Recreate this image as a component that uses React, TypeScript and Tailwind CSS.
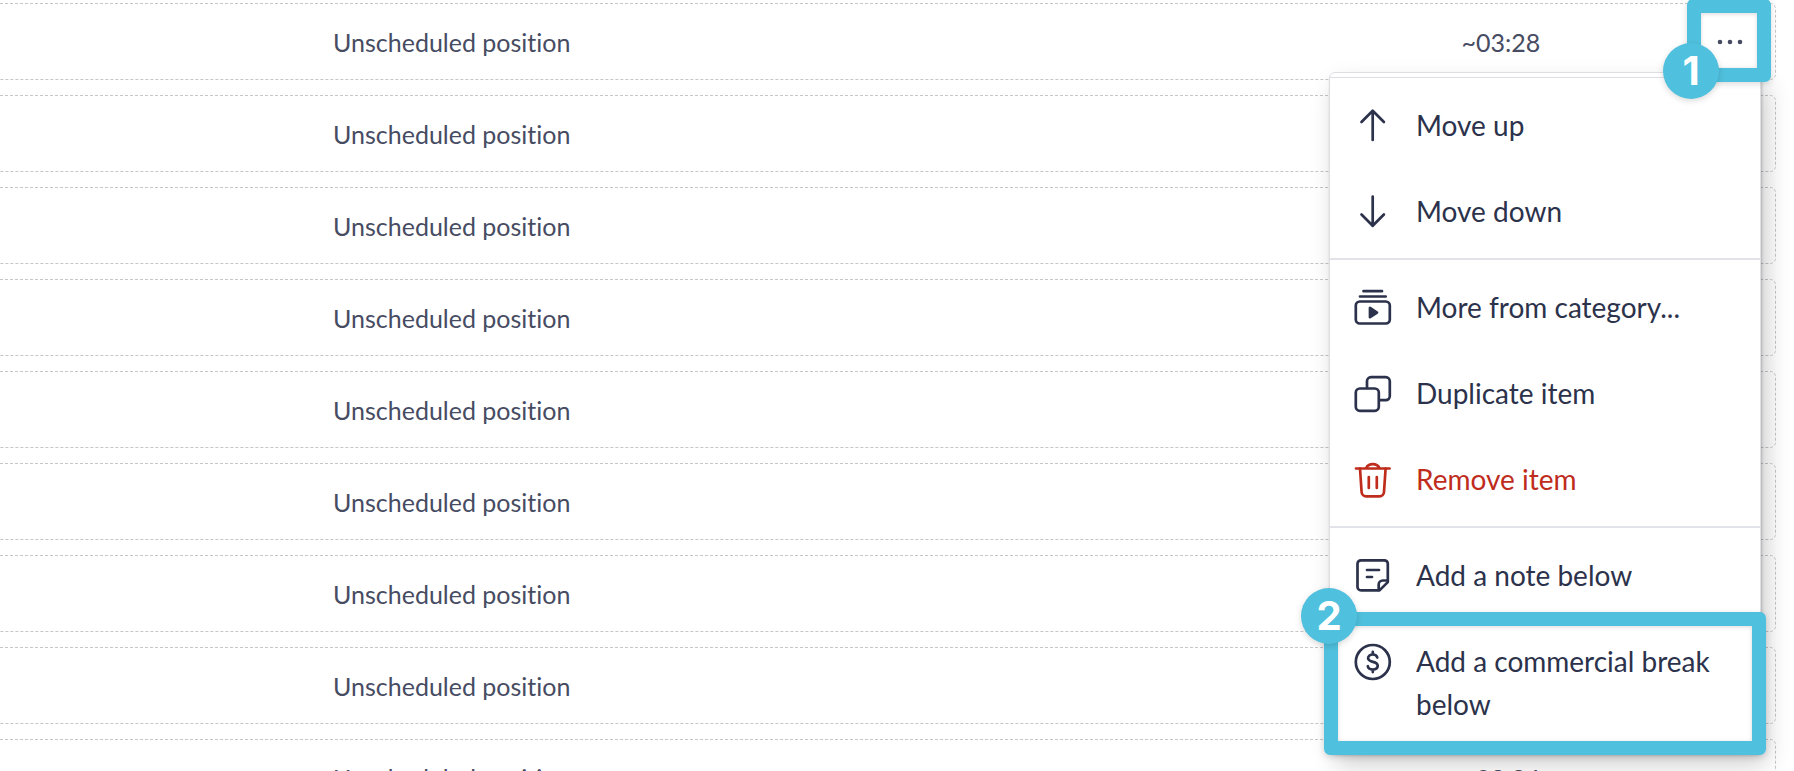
import type { ReactNode } from "react";

type MenuItem = {
  label: string;
  icon: ReactNode;
  danger?: boolean;
  step?: number;
};

const durations = ["~03:28", "", "", "", "", "", "", "", "~03:24"];

const Icon = ({ children }: { children: ReactNode }) => (
  <svg
    viewBox="0 0 36 36"
    className="mt-1 size-9 shrink-0 overflow-visible"
    fill="none"
    stroke="currentColor"
    strokeWidth="2.7"
    strokeLinecap="round"
    strokeLinejoin="round"
    aria-hidden="true"
  >
    {children}
  </svg>
);

const sections: MenuItem[][] = [
  [
    {
      label: "Move up",
      icon: (
        <Icon>
          <path d="M17.7 32V3M6.5 14 17.7 2.8 28.9 14" />
        </Icon>
      ),
    },
    {
      label: "Move down",
      icon: (
        <Icon>
          <path d="M17.7 2.5V32M6.5 20.5l11.2 11.2 11.2-11.2" />
        </Icon>
      ),
    },
  ],
  [
    {
      label: "More from category...",
      icon: (
        <Icon>
          <path d="M8.5 1.2H27M5 6.5h25.7" />
          <rect x="0.8" y="11.5" width="34" height="22" rx="4" />
          <path d="M15 18v9.2l7-4.600z" fill="currentColor" />
        </Icon>
      ),
    },
    {
      label: "Duplicate item",
      icon: (
        <Icon>
          <rect x="0.8" y="12.5" width="23" height="22.3" rx="4" />
          <path d="M12 12V5.200a4 4 0 0 1 4-4h14.800a4 4 0 0 1 4 4v14.900a4 4 0 0 1-4 4h-6.500" />
        </Icon>
      ),
    },
    {
      label: "Remove item",
      danger: true,
      icon: (
        <Icon>
          <path d="M1 6.500h33.600M11.200 6a7.100 6 0 0 1 13.200 0" />
          <path d="m5 6.500 1.600 23.500a4.500 4.500 0 0 0 4.500 4.300h13.400a4.500 4.500 0 0 0 4.500-4.300L30.600 6.500" />
          <path d="M13.800 15v11M21.800 15v11" />
        </Icon>
      ),
    },
  ],
  [
    {
      label: "Add a note below",
      icon: (
        <Icon>
          <path d="M24.500 32.400H6a3.500 3.500 0 0 1-3.500-3.500V5.800A3.500 3.500 0 0 1 6 2.300h23.300a3.500 3.500 0 0 1 3.500 3.500v18.300z" />
          <path d="M23.700 32v-5.500a4 4 0 0 1 4-4h5M12 12h12M12 19h5" />
        </Icon>
      ),
    },
    {
      label: "Add a commercial break below",
      step: 2,
      icon: (
        <Icon>
          <circle cx="17.8" cy="18" r="17" />
          <path d="M22.300 13.500c-.5-1.900-2.200-3-4.500-3-2.700 0-4.700 1.400-4.700 3.600 0 5.200 9.600 2.400 9.600 7.600 0 2.400-2 3.800-4.900 3.800-2.500 0-4.500-1.200-5-3.300M17.800 7.900v2.400M17.800 25.700v2.400" />
        </Icon>
      ),
    },
  ],
];

function StepBadge({ step, className }: { step: number; className: string }) {
  return (
    <span
      className={`absolute flex size-14 items-center justify-center rounded-full bg-[#4fc0dd] font-[Inter,sans-serif] text-[40px] leading-none font-bold text-white shadow-[0_2px_6px_rgba(0,0,0,0.15)] ${className}`}
    >
      {step}
    </span>
  );
}

function ActionsMenu() {
  return (
    <div
      role="menu"
      className="absolute top-[68px] right-[14px] z-10 w-[432px] rounded-md border border-[#dfdfe3] bg-white pt-1 shadow-[1px_3px_3px_rgba(0,0,0,0.2),6px_12px_24px_rgba(0,0,0,0.2)]"
    >
      <div className="divide-y-2 divide-[#e2e2e9] border-t border-[#dfdfe3]">
        {sections.map((items, i) => (
          <div key={i} className="py-1">
            {items.map((item) => (
              <button
                key={item.label}
                role="menuitem"
                className={`relative flex w-full cursor-pointer gap-[25px] px-[25px] pt-[22px] pb-[21px] text-left text-[28px] leading-[43px] ${
                  item.danger ? "text-[#c02c1c]" : "text-[#2c324b]"
                }`}
              >
                {item.icon}
                <span>{item.label}</span>
                {item.step && (
                  <span className="absolute -inset-x-[6px] -top-[6px] -bottom-[8px] rounded-md border-[14px] border-[#4fc0dd] shadow-[0_2px_6px_rgba(0,0,0,0.15),inset_0_1px_4px_rgba(0,0,0,0.15)]">
                    <StepBadge step={item.step} className="-top-[38px] -left-[37px]" />
                  </span>
                )}
              </button>
            ))}
          </div>
        ))}
      </div>
    </div>
  );
}

export default function App() {
  return (
    <main className="h-screen overflow-hidden bg-white font-[Lato,sans-serif]">
      <ul className="flex flex-col gap-[15px] pt-[3px] pr-[18px]">
        {durations.map((duration, i) => (
          <li
            key={i}
            className="relative flex h-[77px] shrink-0 items-center rounded-r-md border border-l-0 border-dashed border-[#c6c6c8] pr-[17px] pl-[333px] text-[25px] leading-9 text-[#474c63] [font-variant-ligatures:none]"
          >
            <span className="flex-1">Unscheduled position</span>
            <span className="w-20 text-center">{duration}</span>
            <div className="ml-[161px] flex w-[56px] justify-center">
              {i === 0 && (
                <button aria-label="Item actions" className="cursor-pointer py-2">
                  <svg viewBox="0 0 26 6" className="h-[6px] w-[26px]" fill="currentColor" aria-hidden="true">
                    <circle cx="3" cy="3" r="2.3" />
                    <circle cx="13" cy="3" r="2.3" />
                    <circle cx="23" cy="3" r="2.3" />
                  </svg>
                </button>
              )}
            </div>
            {i === 0 && (
              <>
                <ActionsMenu />
                <span className="absolute -top-[5px] right-[4px] z-20 h-[83px] w-[84px] rounded-md border-[14px] border-[#4fc0dd] shadow-[0_2px_6px_rgba(0,0,0,0.15),inset_0_1px_4px_rgba(0,0,0,0.15)]">
                  <StepBadge step={1} className="top-[30px] -left-[38px]" />
                </span>
              </>
            )}
          </li>
        ))}
      </ul>
    </main>
  );
}
